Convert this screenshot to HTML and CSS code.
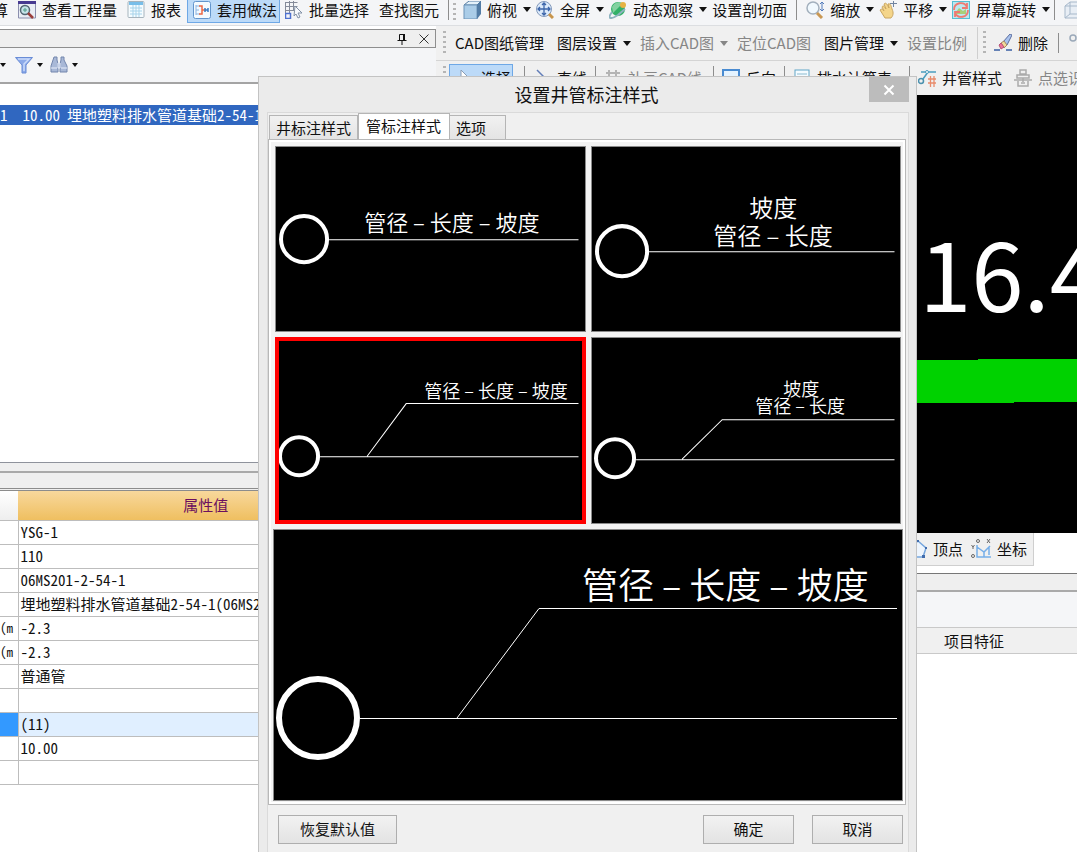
FILE: index.html
```html
<!DOCTYPE html>
<html lang="zh-CN">
<head>
<meta charset="utf-8">
<title>设置井管标注样式</title>
<link rel="stylesheet" href="styles.css">
</head>
<body>
<div class="app">
  <div class="toolbar toolbar-main">
    <button class="tool cut">算</button>
    <button class="tool"><svg class="icon" viewBox="0 0 18 18"><path d="M0.500 1H17.500V17H0.500Z" fill="#e9edf5" stroke="#8b8fae"/><path d="M0 0H18V3H0Z" fill="#473a91"/><circle cx="7" cy="9" r="4.500" fill="#c6e4ea" stroke="#536673" stroke-width="1.500"/><path d="M10 12l5 5" stroke="#9b3f3c" stroke-width="2.500"/><path d="M5 9h4M7 7v4" stroke="#519c87"/></svg>查看工程量</button>
    <button class="tool"><svg class="icon" viewBox="0 0 18 18"><rect x="1" y="0.500" width="16" height="16" rx="1" fill="#f5fcff" stroke="#a7b4bd"/><path d="M2 1h14v3H2z" fill="#78bee9"/><path d="M3 7h12M3 10h12M3 13h12M6 4v12M9 4v12M12 4v12" stroke="#a7d3ea"/></svg>报表</button>
    <button class="tool active"><svg class="icon" viewBox="0 0 18 18"><rect x="0.500" y="0.500" width="17" height="17" rx="2" fill="#f4faff" stroke="#6395cc"/><path d="M3 4v10M3 5h4M3 9h3M3 13h4" stroke="#8bb4e2" fill="none"/><path d="M6 5h3v8H6M9 9h3" stroke="#ec6846" stroke-width="1.500" fill="none"/><path d="M12 7v4M15 7v4M12 9h3" stroke="#397bc2" stroke-width="1.500"/></svg>套用做法</button>
    <button class="tool"><svg class="icon" viewBox="0 0 18 18" fill="none"><path d="M0.500 1.500h12M0.500 5.500h12M0.500 9.500h8M4.500 0v13M8.500 0v10M0.500 1v12" stroke="#858b99"/><path d="M0.500 12.500h5v5h-5z" stroke="#4e71cf" stroke-width="1.500"/><path d="M10 5l7 7h-4l2 4-2 1-2-4-2 2z" fill="#f8fafd" stroke="#8190a5"/></svg>批量选择</button>
    <button class="tool">查找图元</button>
    <i class="sep"></i><i class="grip"></i>
    <button class="tool drop"><svg class="icon" viewBox="0 0 18 18"><path d="M1 4l5-4h12l-4 4z" fill="#e4f1fa" stroke="#557ca2"/><path d="M1 4h13v14H1z" fill="#abcde8" stroke="#6d93b7"/><path d="M14 4l4-4v13l-4 5z" fill="#537da6"/></svg>俯视<i class="caret"></i></button>
    <button class="tool drop"><svg class="icon" viewBox="0 0 18 18"><circle cx="8" cy="8" r="7.500" fill="#dceafa" stroke="#8298bb"/><path d="M13 13l4 4" stroke="#c8954c" stroke-width="3"/><path d="M8 2v12M2 8h12M6 4l2-2 2 2M6 12l2 2 2-2M4 6L2 8l2 2M12 6l2 2-2 2" fill="none" stroke="#3c65aa" stroke-width="1.300"/></svg>全屏<i class="caret"></i></button>
    <button class="tool drop"><svg class="icon" viewBox="0 0 18 18"><ellipse cx="9" cy="8" rx="7" ry="7" fill="#32b168"/><path d="M3 6C6 0 12 1 14 2L4 12z" fill="#83d1a0"/><path d="M3 11C-3 19 3 18 9 14L16 8" fill="none" stroke="#8fb3c0" stroke-width="2"/><circle cx="14" cy="4" r="3" fill="#e6b343"/></svg>动态观察<i class="caret"></i></button>
    <button class="tool">设置剖切面</button>
    <i class="sep"></i>
    <button class="tool drop"><svg class="icon" viewBox="0 0 18 18"><circle cx="7" cy="7" r="6" fill="#f1f9fe" stroke="#a3b0bd" stroke-width="1.500"/><path d="M11 12l5 5" stroke="#c99853" stroke-width="3"/><path d="M16 1v8M14 3l2-2 2 2M14 8l2 2 2-2" stroke="#557dbc" fill="none"/></svg>缩放<i class="caret"></i></button>
    <button class="tool drop"><svg class="icon" viewBox="0 0 18 18"><path d="M1 9c2-2 3 0 4 1L3 6c1-2 2-1 4 2L5 3c2-2 3 0 5 4L9 3c2-1 3 1 4 5 2 4 1 7-1 9H6z" fill="#f4d58a" stroke="#c9a560"/><path d="M11 2.500h7M14.500 0v6" stroke="#7184a0" fill="none"/></svg>平移<i class="caret"></i></button>
    <button class="tool drop"><svg class="icon" viewBox="0 0 18 18"><rect x="0.500" y="0.500" width="17" height="17" fill="#bde7ef" stroke="#55bfd3"/><path d="M4 11l3-4 4 3 3-2v5H4z" fill="#a9cf7a"/><path d="M2 9C2 1 12 0 15 6M15 2v5h-5M16 9c0 8-10 9-13 3M3 16v-5h5" fill="none" stroke="#ee7a72" stroke-width="1.800"/></svg>屏幕旋转<i class="caret"></i></button>
    <i class="sep"></i>
    <button class="tool" aria-label="三维"><svg class="icon" viewBox="0 0 18 18" fill="#e8eef5" stroke="#a7b8ca"><path d="M1 5l5-4h12v12l-4 4H1z"/><path d="M1 5h13v12M14 5l4-4M6 1v12h12M6 13l-5 4" fill="none"/></svg></button>
  </div>

  <div class="workspace">
    <div class="left-pane">
      <div class="pane-caption">
        <button class="caption-button" aria-label="固定"><svg class="glyph" viewBox="0 0 12 12" fill="none" stroke="#111"><path d="M3.500 7V1.500h5V7M1.500 7.500h9M6 8v4"/><path d="M8 1v6" stroke-width="2"/></svg></button>
        <button class="caption-button" aria-label="关闭"><svg class="glyph" viewBox="0 0 12 12" stroke="#333"><path d="M1.500 1.500l9 9M10.500 1.500l-9 9"/></svg></button>
      </div>
      <div class="pane-tools">
        <button class="filter" aria-label="更多"><i class="caret"></i></button>
        <button class="filter" aria-label="过滤"><svg class="icon" viewBox="0 0 18 18"><path d="M0.500 1.500h17L11 9v8H7V9z" fill="#8caae9" stroke="#698cd6"/><path d="M3 3h11L9 8v7" fill="none" stroke="#c9dafa" stroke-width="1.500"/></svg><i class="caret"></i></button>
        <button class="filter" aria-label="查找"><svg class="icon" viewBox="0 0 18 18" fill="#a8b8d7" stroke="#7386ad"><path d="M4 1h3v3l1 4v8H1v-6zM11 1h3v3l3 6v6h-7V8l1-4z"/><path d="M8 7h2v5H8zM1 12h6M11 12h6" stroke="#e8eefb"/></svg><i class="caret"></i></button>
      </div>
      <div class="item-list"><div class="item-row"><span>1</span><span>10.00</span><span>埋地塑料排水管道基础2-54-1</span></div></div>
      <div class="splitter"></div>
      <div class="property-caption"></div>
      <table class="properties">
        <thead><tr><th class="name"></th><th class="value">属性值</th></tr></thead>
        <tbody>
          <tr><td></td><td>YSG-1</td></tr>
          <tr><td></td><td>110</td></tr>
          <tr><td></td><td>06MS201-2-54-1</td></tr>
          <tr><td></td><td>埋地塑料排水管道基础2-54-1(06MS201-2-54-1)</td></tr>
          <tr><td>(m</td><td>-2.3</td></tr>
          <tr><td>(m</td><td>-2.3</td></tr>
          <tr><td></td><td>普通管</td></tr>
          <tr><td></td><td></td></tr>
          <tr class="selected"><td></td><td>(11)</td></tr>
          <tr><td></td><td>10.00</td></tr>
          <tr><td></td><td></td></tr>
        </tbody>
      </table>
    </div>

    <div class="right-pane">
      <div class="toolbar toolbar-cad">
        <i class="grip"></i>
        <button class="tool">CAD图纸管理</button>
        <button class="tool drop">图层设置<i class="caret"></i></button>
        <button class="tool drop" disabled>插入CAD图<i class="caret"></i></button>
        <button class="tool" disabled>定位CAD图</button>
        <button class="tool drop">图片管理<i class="caret"></i></button>
        <button class="tool" disabled>设置比例</button>
        <i class="sep light"></i><i class="grip"></i>
        <button class="tool"><svg class="icon" viewBox="0 0 18 18"><path d="M9 8l7-8 2 1-5 10z" fill="#a9c3ee" stroke="#5b6d9f"/><path d="M7 9l3-2 3 4-3 3z" fill="#f1da97" stroke="#a88964"/><path d="M5 11l2-2 3 4-3 2z" fill="#ef7299" stroke="#b65377"/><path d="M0 16h6M12 16h6" stroke="#6682b6" stroke-width="2"/></svg>删除</button>
        <i class="sep"></i>
        <button class="tool" aria-label="复制"><svg class="icon" viewBox="0 0 18 18" fill="none" stroke="#9ba9b9" stroke-width="1.500"><circle cx="4" cy="4" r="3"/><circle cx="13" cy="13" r="4"/></svg></button>
      </div>
      <div class="toolbar toolbar-draw">
        <i class="grip"></i>
        <button class="tool active"><svg class="icon" viewBox="0 0 18 18"><path d="M4 1l10 10H9l-5 5z" fill="#fff" stroke="#8a9db5"/></svg>选择</button>
        <i class="sep"></i>
        <button class="tool"><svg class="icon" viewBox="0 0 18 18"><path d="M4 1l12 12" stroke="#617db8" stroke-width="1.500"/></svg>直线</button>
        <i class="sep"></i>
        <button class="tool roomy" disabled><svg class="icon" viewBox="0 0 18 18"><path d="M2 4h14M2 11h14M5 1v14M12 1v14" stroke="#b4b4b4" stroke-width="2"/></svg>补画CAD线</button>
        <i class="sep"></i>
        <button class="tool"><svg class="icon" viewBox="0 0 18 18"><rect x="1" y="1" width="16" height="14" fill="#e5f3ff" stroke="#498bd1" stroke-width="2"/></svg>反向</button>
        <i class="sep"></i>
        <button class="tool last"><svg class="icon" viewBox="0 0 18 18"><rect x="2" y="1" width="14" height="16" fill="#f4fbff" stroke="#61a5c7"/><path d="M4 5h10M4 9h10" stroke="#8bbbd0"/></svg>排水计算表</button>
        <i class="sep"></i>
        <button class="tool"><svg class="icon" viewBox="0 0 18 18" fill="none"><circle cx="3" cy="12" r="2.500" stroke="#4b91ae" stroke-width="1.500"/><path d="M5 10l5-7M3 3h15" stroke="#4b9dbe" stroke-width="1.500"/><circle cx="9" cy="3" r="1.500" fill="#fff" stroke="#4b9dbe"/><path d="M10 10h8M10 14h8M12.500 7v11M16 7v11" stroke="#e88b6b" stroke-width="1.300"/></svg>井管样式</button>
        <button class="tool" disabled><svg class="icon" viewBox="0 0 18 18" fill="none" stroke="#aaa" stroke-width="1.500"><path d="M6 1h6v4H6zM3 6h12v3H3zM0 11h18M4 12v5h10v-5M9 9v4M7 14h4"/></svg>点选识别</button>
      </div>
      <svg class="canvas" role="img" aria-label="绘图区">
        <text class="canvas-label" x="431" y="217">116.4</text>
        <path d="M0 265H542V264H1600V307H578V308H0Z" fill="#00d200"/>
      </svg>
      <div class="toolbar toolbar-snap">
        <button class="tool"><svg class="icon" viewBox="0 0 18 18"><path d="M9 1l8 7-3 9H4L1 8z" fill="#eef5fd" stroke="#75a6de" stroke-width="1.500"/><path d="M8 0h2v2H8zM16 7h2v2h-2zM13 15h3v3h-3z" fill="#416cac"/></svg>顶点</button>
        <button class="tool"><svg class="icon large" viewBox="0 0 20 20" fill="none"><path d="M6 6v12h14M6 8l7 5 6-6M13 13v5M18 8v8" stroke="#76aee8" stroke-width="1.500"/><path d="M0.500 6l1.500 2 1.500-2M2 8v2M16 0l3 4M19 0l-3 4" stroke="#666"/><circle cx="7" cy="2" r="1.500" stroke="#666"/><circle cx="2" cy="17" r="1.500" stroke="#666"/></svg>坐标</button>
      </div>
      <div class="lower-splitter"></div>
      <div class="lower-tools"></div>
      <table class="features"><thead><tr><th class="lead"></th><th class="feature">项目特征</th><th></th></tr></thead></table>
    </div>
  </div>

  <section class="dialog" role="dialog" aria-labelledby="dialog-title">
    <header class="dialog-title">
      <h1 id="dialog-title">设置井管标注样式</h1>
      <button class="dialog-close" aria-label="关闭"><svg class="glyph" viewBox="0 0 12 12" stroke="#fff" stroke-width="2"><path d="M1.500 1.500l9 9M10.500 1.500l-9 9"/></svg></button>
    </header>
    <div class="dialog-client">
      <div class="tabs" role="tablist">
        <button class="tab" role="tab">井标注样式</button>
        <button class="tab current" role="tab" aria-selected="true">管标注样式</button>
        <button class="tab short" role="tab">选项</button>
      </div>
      <div class="tab-panel" role="tabpanel">
        <div class="styles-grid">
          <button class="style-tile"><svg class="drawing" viewBox="0 0 308 184">
            <circle cx="28" cy="92" r="23" stroke-width="4"/><path d="M53 92.500H302"/>
            <text x="88" y="84" font-size="22">管径 – 长度 – 坡度</text></svg></button>
          <button class="style-tile"><svg class="drawing" viewBox="0 0 308 184">
            <circle cx="30" cy="104" r="25" stroke-width="4"/><path d="M57 104.500H302"/>
            <text x="157" y="70" font-size="24">坡度</text><text x="121" y="98" font-size="24">管径 – 长度</text></svg></button>
          <button class="style-tile chosen" aria-pressed="true"><svg class="drawing" viewBox="0 0 308 184">
            <circle cx="23" cy="118" r="19" stroke-width="4"/><path d="M44 118.500H302M91 118L130 65.500H302"/>
            <text x="148" y="60" font-size="18">管径 – 长度 – 坡度</text></svg></button>
          <button class="style-tile"><svg class="drawing" viewBox="0 0 308 184">
            <circle cx="23" cy="120" r="19" stroke-width="4"/><path d="M44 121.500H302M90 121L130 81.500H302"/>
            <text x="191" y="58" font-size="18">坡度</text><text x="163" y="75" font-size="18">管径 – 长度</text></svg></button>
        </div>
        <div class="style-preview"><svg class="drawing" viewBox="0 0 628 270">
          <circle cx="44" cy="188" r="39" stroke-width="6"/><path d="M86 188.500H623M183 188L265 78.500H623"/>
          <text x="308" y="69" font-size="36">管径 – 长度 – 坡度</text></svg></div>
      </div>
      <footer class="dialog-actions">
        <button class="push wide">恢复默认值</button>
        <button class="push">确定</button>
        <button class="push">取消</button>
      </footer>
    </div>
  </section>
</div>
</body>
</html>
```
FILE: styles.css
```css
* {
  box-sizing: border-box;
}

body {
  margin: 0;
  font: 15px/20px "Noto Sans CJK SC", sans-serif;
  color: #111;
  background: #fff;
}

button {
  margin: 0;
  padding: 0;
  border: 0;
  background: none;
  font: inherit;
  color: inherit;
}

.app {
  position: relative;
  display: flex;
  flex-direction: column;
  height: 100vh;
  overflow: hidden;
}

/* Toolbars */

.toolbar {
  display: flex;
  flex: none;
  align-items: center;
  overflow: hidden;
  white-space: nowrap;
  background: #f0f0f0;
}

.toolbar-main {
  height: 26px;
  padding-bottom: 6px;
  background: #f4f5f7;
  border-bottom: 1px solid #dcdee1;
}

.tool {
  display: flex;
  flex: none;
  align-items: center;
  gap: 6px;
  height: 26px;
  padding: 0 5px;
}

.tool.drop {
  padding-right: 0;
}

.tool:disabled {
  color: #868686;
}

.tool.cut {
  width: 13px;
  justify-content: flex-end;
  overflow: hidden;
}

.tool.active {
  margin-left: 1px;
  padding-right: 2px;
  background: #bcdaf8;
  border: 1px solid #6ea8e6;
}

.icon {
  flex: none;
  width: 18px;
  height: 18px;
}

.icon.large {
  width: 20px;
  height: 20px;
}

.glyph {
  width: 12px;
  height: 12px;
}

.caret {
  border: 4px solid transparent;
  border-top: 5px solid currentColor;
  border-bottom: 0;
}

.sep {
  flex: none;
  width: 1px;
  height: 20px;
  margin: 0 4px;
  background: #8d8d8d;
}

.sep.light {
  height: 32px;
  background: #cfcfcf;
}

.grip {
  flex: none;
  width: 3px;
  height: 24px;
  margin-right: 2px;
  background: repeating-linear-gradient(#b5b5b5 0 2px, transparent 2px 5px);
}

/* Left side */

.workspace {
  display: flex;
  flex: 1;
  min-height: 0;
}

.left-pane {
  flex: none;
  width: 436px;
  padding-top: 3px;
  overflow: hidden;
}

.pane-caption {
  display: flex;
  align-items: center;
  justify-content: flex-end;
  gap: 10px;
  height: 19px;
  padding-right: 5px;
  background: #efefef;
  border: 1px solid #8e8e8e;
  border-left: 0;
}

.caption-button {
  display: flex;
}

.pane-tools {
  display: flex;
  align-items: center;
  gap: 7px;
  height: 36px;
  background: #f4f5f7;
  border-bottom: 2px solid #a4a4a4;
}

.filter {
  display: flex;
  align-items: center;
  gap: 4px;
}

.filter .caret {
  border-width: 4px 3px 0;
}

.filter:first-child .caret {
  margin-right: 2px;
}

.item-list {
  height: 378px;
  padding-top: 21px;
  background: #fff;
}

.item-row {
  display: flex;
  gap: 7px;
  height: 20px;
  white-space: nowrap;
  color: #fff;
  background: #3067c0;
  font-feature-settings: "hwid";
}

.item-row span:first-child {
  padding-right: 8px;
}

.splitter {
  height: 9px;
  background: #efefef;
  border-top: 1px solid #8f939c;
}

.property-caption {
  height: 20px;
  background: #efefef;
  border-top: 2px solid #a9a9a9;
  border-bottom: 3px double #8c8c8c;
}

.properties {
  width: 100%;
  table-layout: fixed;
  border-collapse: collapse;
  font-size: 15px;
  line-height: 22px;
  font-feature-settings: "hwid";
}

.properties th {
  height: 29px;
  padding: 0;
  font-weight: 400;
}

.properties .name {
  width: 18px;
  background: linear-gradient(#fff, #eee);
}

.properties .value {
  padding-right: 42px;
  color: #6b0f5e;
  background: linear-gradient(#f8d89c, #efbf60);
}

.properties td {
  height: 24px;
  padding: 0 2px;
  overflow: hidden;
  white-space: nowrap;
  border: 1px solid #bdbdbd;
}

.properties td:first-child {
  padding: 0;
  border-left: 0;
  font-size: 13px;
}

.properties .selected td {
  background: #e0efff;
}

.properties .selected td:first-child {
  background: #3399ff;
}

/* Right side */

.right-pane {
  display: flex;
  flex: 1;
  flex-direction: column;
  min-width: 0;
  background: #fff;
}

.toolbar-cad,
.toolbar-draw {
  padding-left: 7px;
}

.toolbar-cad {
  gap: 3px;
  height: 35px;
  border-bottom: 1px solid #d4d4d4;
}

.toolbar-cad .sep {
  margin: 0 2px;
}

.toolbar-cad .grip {
  margin-right: 0;
}

.toolbar-cad .grip:first-child {
  margin-right: 1px;
}

.toolbar-cad .drop {
  padding-right: 1px;
}

.toolbar-draw {
  gap: 2px;
  height: 34px;
}

.toolbar-draw .grip {
  margin-right: 0;
}

.toolbar-draw .sep {
  height: 24px;
  margin: 0 1px;
}

.toolbar-draw .active {
  height: 28px;
  margin-right: 8px;
  padding: 0 1px 0 7px;
}

.toolbar-draw .roomy {
  padding-right: 8px;
}

.toolbar-draw .last {
  padding-right: 14px;
}

.canvas {
  display: block;
  flex: none;
  width: 100%;
  height: 438px;
  background: #000;
}

.canvas-label {
  font-size: 94px;
  fill: #fff;
}

.toolbar-snap {
  justify-content: flex-end;
  height: 33px;
  margin-right: 43px;
  padding-right: 2px;
  border-right: 1px solid #cfcfcf;
  border-bottom: 1px solid #cfcfcf;
}

.toolbar-snap .tool {
  padding: 0 4px;
}

.lower-splitter {
  height: 19px;
  margin-top: 7px;
  background: #efefef;
  border-top: 1px solid #777;
  border-bottom: 2px solid #aaa;
}

.lower-tools {
  height: 35px;
  background: #f5f6f8;
}

.features {
  width: 100%;
  table-layout: fixed;
  border-collapse: collapse;
}

.features th {
  height: 26px;
  padding: 0;
  font-weight: 400;
  background: #f0f0f0;
  border-top: 1px solid #c9c9c9;
  border-bottom: 1px solid #c9c9c9;
}

.features .lead {
  width: 478px;
}

.features .feature {
  width: 120px;
}

/* Dialog */

.dialog {
  position: absolute;
  top: 76px;
  left: 258px;
  width: 659px;
  padding: 0 7px 8px 8px;
  background: #ebebeb;
  border: 1px solid #c3c3c3;
}

.dialog-title {
  display: flex;
  align-items: flex-start;
  height: 35px;
}

.dialog-title h1 {
  flex: 1;
  margin: 0;
  padding-left: 37px;
  font-size: 18px;
  font-weight: 400;
  line-height: 35px;
  text-align: center;
}

.dialog-close {
  display: flex;
  align-items: center;
  justify-content: center;
  width: 40px;
  height: 25px;
  background: #bcbcbc;
}

.dialog-client {
  background: #f0f0f0;
  border: 1px solid #dadada;
}

.tabs {
  display: flex;
  align-items: flex-end;
  height: 26px;
  padding-left: 1px;
}

.tab {
  height: 24px;
  padding: 0 6px;
  background: linear-gradient(#f1f1f1, #e4e4e4);
  border: 1px solid #b5b5b5;
  border-bottom: 0;
}

.tab.current {
  height: 26px;
  padding: 0 8px 2px 7px;
  background: #fff;
}

.tab.short {
  padding: 0 19px 0 6px;
  border-left: 0;
}

.tab-panel {
  width: 638px;
  padding: 4px 2px 3px 4px;
  background: #f3f3f3;
  border: 1px solid #b8b8b8;
  box-shadow: inset 0 0 0 2px #fff;
}

.styles-grid {
  display: grid;
  grid-template-columns: 1fr 1fr;
  gap: 5px;
  padding: 2px 2px 0;
}

.style-tile,
.style-preview {
  background: #000;
  border: 1px solid #8a8a8a;
}

.style-tile.chosen {
  outline: 4px solid #f00;
  outline-offset: -4px;
}

.style-preview {
  margin-top: 5px;
}

.drawing {
  display: block;
  width: 100%;
  fill: none;
  stroke: #fff;
}

.drawing text {
  font-weight: 350;
  fill: #fff;
  stroke: none;
}

.dialog-actions {
  display: flex;
  gap: 18px;
  padding: 10px 5px 10px 10px;
}

.push {
  width: 91px;
  height: 29px;
  background: linear-gradient(#f2f2f2, #e3e3e3);
  border: 1px solid #aeaeae;
}

.push.wide {
  width: 119px;
  margin-right: auto;
}
```
